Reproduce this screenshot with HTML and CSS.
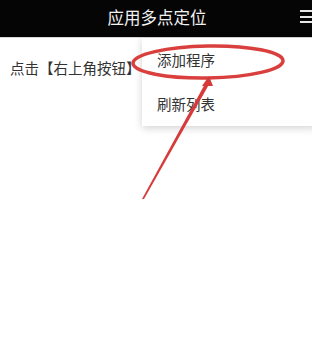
FILE: index.html
```html
<!DOCTYPE html>
<html lang="zh">
<head>
<meta charset="utf-8">
<link rel="stylesheet" href="styles.css">
</head>
<body>
<div class="page">
  <header class="bar">
    <span class="title">应用多点定位</span>
    <span class="menu-btn"><i></i><i></i><i></i></span>
  </header>
  <main class="content">
    <p class="hint">点击【右上角按钮】</p>
  </main>
  <div class="popup">
    <div class="item">添加程序</div>
    <div class="item">刷新列表</div>
  </div>
  <svg class="marks" width="312" height="362" viewBox="0 0 312 362">
    <ellipse cx="208" cy="62" rx="75" ry="16" transform="rotate(-1 208 62)" fill="none" stroke="#d9403d" stroke-width="3.5"/>
    <polygon points="142,199 206,82 211,81 144,199" fill="#d63b3b"/>
    <polygon points="209,76 202,86 213,86" fill="#d63b3b"/>
  </svg>
</div>
</body>
</html>
```
FILE: styles.css
```css
html, body {
  margin: 0;
  padding: 0;
  background: #fff;
}
.page {
  position: relative;
  width: 312px;
  height: 362px;
  overflow: hidden;
  font-family: "Noto Sans CJK SC", "Noto Sans", sans-serif;
}
.bar {
  height: 37px;
  background: #050505;
  border-bottom: 1px solid #d8d8d8;
  display: flex;
  align-items: center;
  justify-content: center;
  position: relative;
}
.title {
  color: #f2f2f2;
  font-size: 16.5px;
  line-height: 1;
  margin-left: 2px;
  margin-top: -2px;
}
.menu-btn {
  position: absolute;
  right: -2px;
  top: 10px;
  width: 14px;
  height: 13px;
  display: flex;
  flex-direction: column;
  justify-content: space-between;
}
.menu-btn i {
  display: block;
  height: 2px;
  background: #e8e8e8;
}
.content {
  padding: 0 10px;
}
.hint {
  margin: 0;
  padding-top: 20px;
  font-size: 14.5px;
  line-height: 20px;
  color: #333;
}
.popup {
  position: absolute;
  left: 142px;
  top: 38px;
  width: 175px;
  background: #fff;
  box-shadow: 0 2px 8px rgba(0,0,0,0.18);
  padding: 0;
}
.item {
  height: 44px;
  line-height: 44px;
  padding-left: 15px;
  font-size: 14.5px;
  color: #333;
}
.marks {
  position: absolute;
  left: 0;
  top: 0;
  pointer-events: none;
}
```
